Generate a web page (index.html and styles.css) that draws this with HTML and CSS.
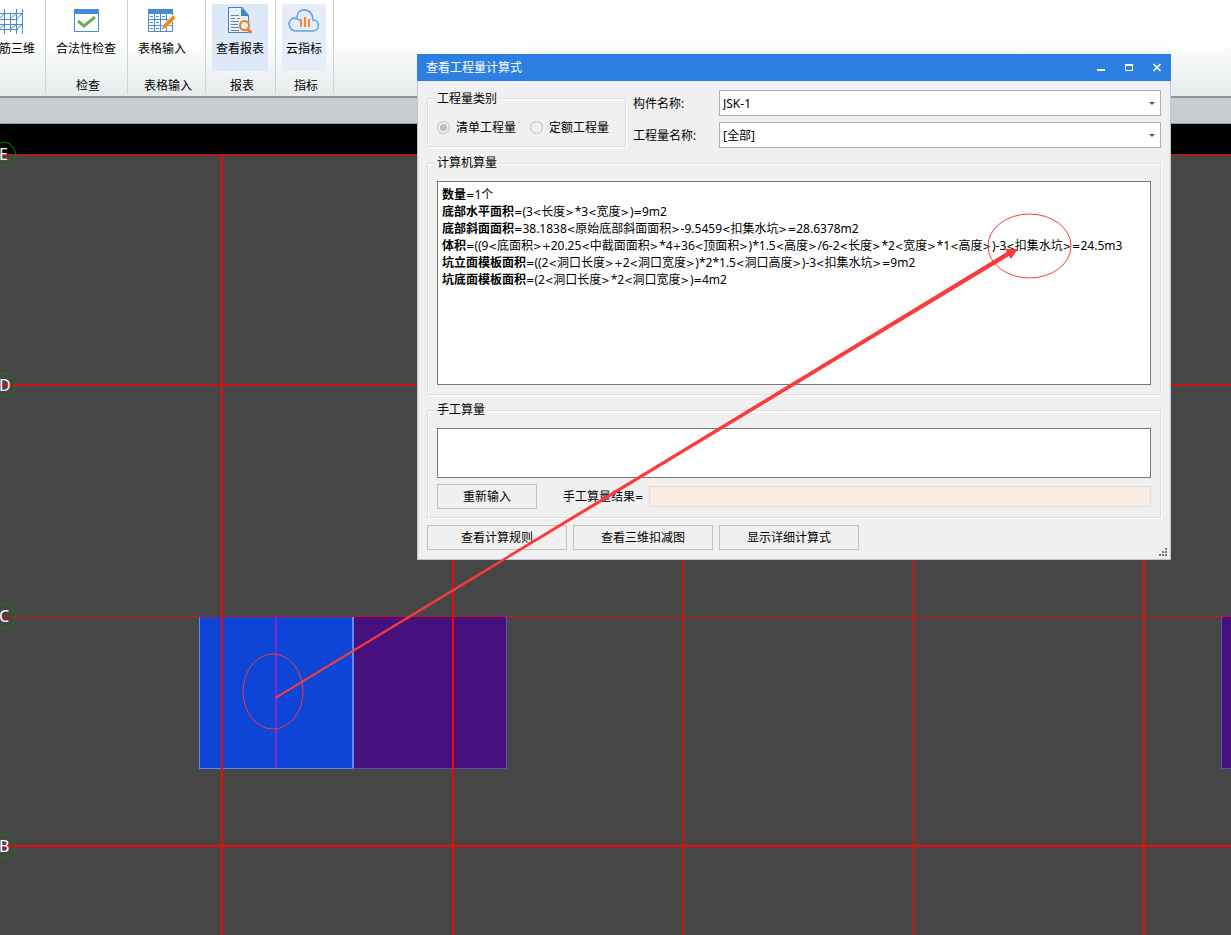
FILE: index.html
```html
<!DOCTYPE html>
<html lang="zh-CN">
<head>
<meta charset="utf-8">
<title>查看工程量计算式</title>
<link rel="stylesheet" href="styles.css">
</head>
<body>
<div class="app">
  <header class="ribbon">
    <section class="group group-first">
      <button class="tool" type="button">
        <svg class="icon" width="32" height="26" viewBox="0 0 32 26" fill="none" stroke="#468bd9"><path d="M6.500 1V26M18.500 1V26M12.500 6V24M24.500 1V26M1 5.500H24M1 11.500H20M1 16.500H24M1 21.500H20M1 11 6 6M12 11 18 6M18 11 24 6M1 21 6 17M12 21 18 17M18 21 24 17"/></svg>
        <span>筋三维</span>
      </button>
    </section>
    <section class="group group-check">
      <button class="tool" type="button">
        <svg class="icon" width="32" height="26" viewBox="0 0 32 26"><path fill="#fff" stroke="#468bd9" d="M4.500 1.500h24v22h-24z"/><path fill="#468bd9" d="M4 1h25v5H4z"/><path fill="none" stroke="#70ab55" stroke-width="3" d="m8 13 6 5L25 9"/></svg>
        <span>合法性检查</span>
      </button>
      <h2>检查</h2>
    </section>
    <section class="group group-table">
      <button class="tool" type="button">
        <svg class="icon" width="32" height="26" viewBox="0 0 32 26"><path fill="#fff" stroke="#468bd9" d="M2.500 1.500h24v22h-24z"/><path fill="#468bd9" d="M2 1h25v5H2z"/><path fill="none" stroke="#468bd9" d="M8.500 6v17M14.500 6v17M20.500 6v17M2 11.500h25M2 17.500h25M4 8.500h3M10 8.500h3M16 8.500h3M4 14.500h3M10 14.500h3M4 20.500h3M10 20.500h3"/><path fill="#ef8b22" stroke="#fff" stroke-width=".6" d="m15 22 2-5L27 7l3 3-10 10z"/></svg>
        <span>表格输入</span>
      </button>
      <h2>表格输入</h2>
    </section>
    <section class="group group-report">
      <button class="tool tool-on" type="button">
        <svg class="icon" width="32" height="28" viewBox="0 0 32 28"><path fill="#e8f0fb" stroke="#3c83cf" d="M4.500.500h14l6 8v17h-20z"/><path fill="#3c83cf" d="M17 0l8 9h-8z"/><path stroke="#768391" d="M7 8.500h8M7 11.500h4M13 11.500h3M7 14.500h8M7 17.500h7M7 20.500h8M7 23.500h8"/><circle cx="20.500" cy="18.500" r="4.500" fill="#e8f0fb" stroke="#f07c28" stroke-width="2"/><path stroke="#f07c28" stroke-width="3" d="m23.500 22 4 4"/></svg>
        <span>查看报表</span>
      </button>
      <h2>报表</h2>
    </section>
    <section class="group group-index">
      <button class="tool tool-soft" type="button">
        <svg class="icon" width="32" height="26" viewBox="0 0 32 26" fill="none"><path stroke="#5aa4f5" stroke-width="1.600" stroke-linecap="round" d="M8 23h16c9 0 8-11 1-11C25-1 9-1 9 9M11 12C4 7-1 14 2 19c1 3 3 4 6 4"/><path stroke="#f1883d" stroke-width="2" d="M13 11v8M17 9v10M21 11v8"/></svg>
        <span>云指标</span>
      </button>
      <h2>指标</h2>
    </section>
  </header>
  <div class="strip"></div>
  <main class="canvas">
    <svg class="drawing" width="1231" height="811" viewBox="0 124 1231 811" shape-rendering="crispEdges">
      <path fill="#000" d="M0 124h1231v30H0z"/>
      <path fill="#0d46d6" d="M199 616h154v153H199z"/>
      <path fill="#46117f" d="M353 616h154v153H353zM1221 616h10v153h-10z"/>
      <path fill="#7b2bd0" d="M275 616h2v152h-2z"/>
      <path fill="#5a8df0" d="M199 616h1v153h-1zM352 616h2v153h-2zM199 768h154v1H199z"/>
      <path fill="#6549b5" d="M353 768h154v1H353zM506 616h1v152h-1zM1221 616h1v153h-1zM1221 768h10v1h-10z"/>
      <path fill="#f00" d="M0 154h1231v1H0zM0 846h1231v1H0zM222 154h1v781h-1zM452 154h1v781h-1zM1144 154h1v781h-1z"/>
      <path fill="#c91414" d="M0 384h1231v2H0zM0 616h1231v1H0zM682 154h2v781h-2zM913 154h2v781h-2z"/>
      <path fill="#e60c0c" d="M0 845h1231v1H0zM221 154h1v781h-1zM453 154h1v781h-1zM1143 154h1v781h-1z"/>
      <g fill="none" stroke="#0a820a" shape-rendering="auto"><path id="bubble" d="m-8 154 2-6 4-4 6-2 6 2 4 5 2 5-2 6-4 4-6 2-6-2-4-4z"/><use href="#bubble" y="231"/><use href="#bubble" y="462"/><use href="#bubble" y="692"/></g>
      <g class="axis" shape-rendering="auto"><text x="-1" y="160">E</text><text x="-1" y="391">D</text><text x="-1" y="622">C</text><text x="-1" y="852">B</text></g>
    </svg>
  </main>

  <section class="dialog" role="dialog" aria-labelledby="dialog-title">
    <header class="titlebar">
      <h1 id="dialog-title">查看工程量计算式</h1>
      <button type="button" aria-label="最小化"><svg width="10" height="10"><path fill="#fff" d="M1 6h8v2H1z"/></svg></button>
      <button type="button" aria-label="最大化"><svg width="10" height="10"><path fill="#fff" fill-rule="evenodd" d="M1 1h8v7H1zM2 3v4h6V3z"/></svg></button>
      <button type="button" aria-label="关闭"><svg width="10" height="10"><path stroke="#fff" stroke-width="1.600" d="m1.500 1 7 7m0-7-7 7"/></svg></button>
    </header>
    <form class="body">
      <div class="top">
        <fieldset class="kind">
          <legend>工程量类别</legend>
          <div class="radios">
            <label><input type="radio" name="kind" checked disabled>清单工程量</label>
            <label><input type="radio" name="kind" disabled>定额工程量</label>
          </div>
        </fieldset>
        <div class="fields">
          <label for="part">构件名称:</label>
          <div class="combo"><select id="part"><option>JSK-1</option></select></div>
          <label for="quantity">工程量名称:</label>
          <div class="combo"><select id="quantity"><option>[全部]</option></select></div>
        </div>
      </div>
      <fieldset class="computed">
        <legend>计算机算量</legend>
        <div class="formulas">
          <p><b>数量</b><i>=</i>1个</p>
          <p><b>底部水平面积</b><i>=</i>(3<span><i>&lt;</i>长度<i>&gt;</i></span>*3<span><i>&lt;</i>宽度<i>&gt;</i></span>)<i>=</i>9m2</p>
          <p><b>底部斜面面积</b><i>=</i>38.1838<span><i>&lt;</i>原始底部斜面面积<i>&gt;</i></span>-9.5459<span><i>&lt;</i>扣集水坑<i>&gt;</i></span><i>=</i>28.6378m2</p>
          <p><b>体积</b><i>=</i>((9<span><i>&lt;</i>底面积<i>&gt;</i></span><i>+</i>20.25<span><i>&lt;</i>中截面面积<i>&gt;</i></span>*4<i>+</i>36<span><i>&lt;</i>顶面积<i>&gt;</i></span>)*1.5<span><i>&lt;</i>高度<i>&gt;</i></span>/6-2<span><i>&lt;</i>长度<i>&gt;</i></span>*2<span><i>&lt;</i>宽度<i>&gt;</i></span>*1<span><i>&lt;</i>高度<i>&gt;</i></span>)-3<span><i>&lt;</i>扣集水坑<i>&gt;</i></span><i>=</i>24.5m3</p>
          <p><b>坑立面模板面积</b><i>=</i>((2<span><i>&lt;</i>洞口长度<i>&gt;</i></span><i>+</i>2<span><i>&lt;</i>洞口宽度<i>&gt;</i></span>)*2*1.5<span><i>&lt;</i>洞口高度<i>&gt;</i></span>)-3<span><i>&lt;</i>扣集水坑<i>&gt;</i></span><i>=</i>9m2</p>
          <p><b>坑底面模板面积</b><i>=</i>(2<span><i>&lt;</i>洞口长度<i>&gt;</i></span>*2<span><i>&lt;</i>洞口宽度<i>&gt;</i></span>)<i>=</i>4m2</p>
        </div>
      </fieldset>
      <fieldset class="manual">
        <legend>手工算量</legend>
        <textarea aria-label="手工算量"></textarea>
        <div class="result">
          <button class="btn btn-reset" type="button">重新输入</button>
          <label for="result">手工算量结果<i>=</i></label>
          <input id="result" type="text" readonly>
        </div>
      </fieldset>
      <div class="actions">
        <button class="btn" type="button">查看计算规则</button>
        <button class="btn" type="button">查看三维扣减图</button>
        <button class="btn" type="button">显示详细计算式</button>
      </div>
    </form>
    <svg class="grip" width="8" height="8" fill="#6f737b"><path d="M6 0h2v2H6zM6 3h2v2H6zM3 3h2v2H3zM6 6h2v2H6zM3 6h2v2H3zM0 6h2v2H0z"/></svg>
  </section>

  <svg class="marks" width="1231" height="935" viewBox="0 0 1231 935">
    <g fill="none" stroke="#f5393c"><ellipse cx="1029.500" cy="246" rx="41.500" ry="32"/><ellipse cx="273" cy="691.500" rx="30" ry="37.500"/></g>
    <path fill="#fb3b3b" d="m275 697 732-445-2-3 13 0-7 10-2-3L275.500 699z"/>
  </svg>
</div>
</body>
</html>
```
FILE: styles.css
```css
* { box-sizing: border-box; }
body {
  margin: 0;
  font: 12px/17px "Noto Sans", "Noto Sans CJK SC", sans-serif;
  color: #000;
}
button, input, select, textarea { font: inherit; color: inherit; margin: 0; }
h1, h2, p { margin: 0; font-size: 12px; font-weight: 400; }
i { font: 10px/12px "DejaVu Sans", sans-serif; }

.app {
  position: relative;
  display: flex;
  flex-direction: column;
  min-height: 100vh;
  overflow: hidden;
}

/* Ribbon */
.ribbon {
  display: flex;
  height: 98px;
  background: linear-gradient(#fff 40%, #e6ebec);
  border-bottom: 2px solid #909498;
}
.group {
  display: flex;
  flex-direction: column;
  justify-content: space-between;
  align-items: center;
  padding: 4px 0 0 3px;
  margin: 0 0 2px;
  border-right: 1px solid #cfd1d2;
}
.group-first { width: 46px; padding-left: 0; align-items: flex-start; }
.group-check { width: 82px; }
.group-table { width: 78px; }
.group-report { width: 70px; }
.group-index { width: 58px; }
.tool {
  display: flex;
  flex-direction: column;
  align-items: center;
  gap: 5px;
  height: 67px;
  padding: 3px 4px 0;
  border: 0;
  background: none;
  white-space: nowrap;
}
.icon { height: 28px; flex: none; }
.group-first .tool { padding: 3px 0 0; margin-left: -2px; }
.group-first .icon { margin-right: 6px; }
.group-check .tool, .group-report .tool, .group-index .tool { margin-right: 4px; }
.group-table .tool { margin-right: 12px; }
.tool-on { background: #dde8f9; }
.tool-soft { background: #e6edf9; }
.strip { height: 26px; background: #c9ccd1; border-bottom: 1px solid #94989d; }

/* Drawing area */
.canvas { flex: 1; background: #464646; overflow: hidden; }
.drawing { display: block; }
.axis { fill: #fff; font-size: 16px; }

/* Dialog window */
.dialog {
  position: absolute;
  left: 417px;
  top: 54px;
  width: 754px;
  background: #f0f0f0;
  border: 1px solid #bcc4d6;
  border-top: 0;
}
.titlebar {
  display: flex;
  align-items: center;
  gap: 8px;
  height: 27px;
  margin: 0 -1px;
  padding: 0 4px 0 9px;
  background: #2d7fe2;
  color: #fff;
}
.titlebar h1 { flex: 1; }
.titlebar button {
  display: grid;
  place-items: center;
  width: 20px;
  height: 20px;
  padding: 0;
  border: 0;
  background: none;
}
.body { padding: 9px; }
fieldset {
  min-width: 0;
  margin: 0 0 7px;
  padding: 10px 9px 9px;
  border: 1px solid #dfdfdf;
  box-shadow: 1px 1px #fff, inset 1px 1px #fff;
}
legend {
  height: 16px;
  line-height: 16px;
  padding: 0 2px;
  margin-left: -2px;
  background: #f0f0f0;
}
.top { display: flex; gap: 7px; margin-bottom: 7px; }
.kind { width: 199px; margin: 0 0 1px; padding: 0 9px; }
.kind legend { line-height: 18px; }
.radios { display: flex; align-items: center; gap: 14px; height: 40px; padding-top: 2px; }
.radios label { display: flex; align-items: center; gap: 6px; white-space: nowrap; }
.radios input {
  appearance: none;
  flex: none;
  width: 13px;
  height: 13px;
  padding: 2px;
  border: 1px solid #bdbdbd;
  border-radius: 50%;
}
.radios input:checked { background: #bdbdbd content-box; }
.fields {
  flex: 1;
  display: grid;
  grid-template-columns: 80px 1fr;
  grid-template-rows: 26px 26px;
  gap: 6px;
  align-items: center;
}
.combo { position: relative; height: 26px; }
.combo::after {
  content: "";
  position: absolute;
  right: 6px;
  top: 12px;
  border: 3px solid transparent;
  border-top-color: #555;
  border-bottom: 0;
  pointer-events: none;
}
.combo select {
  appearance: none;
  width: 100%;
  height: 26px;
  padding: 0 20px 0 3px;
  border: 1px solid #aeaeae;
  border-radius: 0;
  background: #fff;
}
.formulas {
  height: 204px;
  padding: 4px;
  border: 1px solid #777;
  background: #fff;
  white-space: nowrap;
  overflow: hidden;
}
.formulas p { height: 17px; }
.formulas span { padding-right: 1px; }
.manual { padding-bottom: 8px; }
textarea {
  display: block;
  width: 100%;
  height: 50px;
  border: 1px solid #777;
  border-radius: 0;
  background: #fff;
  resize: none;
}
.result { display: flex; align-items: center; margin-top: 6px; }
.result label { margin: 0 6px 0 26px; }
.result input {
  flex: 1;
  height: 21px;
  border: 1px solid #dedede;
  background: #faeee4;
}
.btn {
  width: 140px;
  height: 25px;
  padding: 0;
  border: 1px solid #c1c1c1;
  background: #f0f0f0;
}
.btn-reset { width: 100px; }
.actions { display: flex; gap: 6px; }
.grip { position: absolute; right: 3px; bottom: 3px; }

/* Annotation layer */
.marks { position: absolute; left: 0; top: 0; pointer-events: none; }
```
